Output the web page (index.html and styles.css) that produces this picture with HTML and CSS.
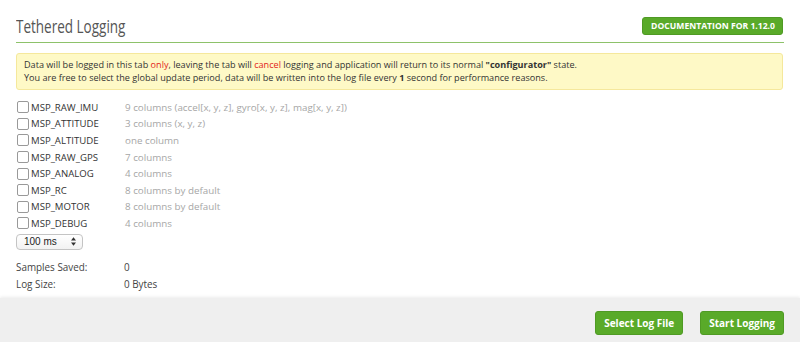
FILE: index.html
```html
<!DOCTYPE html>
<html>
<head>
<meta charset="utf-8">
<link rel="stylesheet" href="styles.css">
</head>
<body>
<div class="tab">
  <div class="header">
    <div class="title">Tethered Logging</div>
    <a class="doc-btn">DOCUMENTATION FOR 1.12.0</a>
  </div>
  <div class="note">
    <p>Data will be logged in this tab <span class="red">only</span>, leaving the tab will <span class="red">cancel</span> logging and application will return to its normal <strong>"configurator"</strong> state.</p>
    <p>You are free to select the global update period, data will be written into the log file every <strong>1</strong> second for performance reasons.</p>
  </div>
  <div class="props">
    <label class="row"><span class="cb"></span><span class="name">MSP_RAW_IMU</span><span class="desc">9 columns (accel[x, y, z], gyro[x, y, z], mag[x, y, z])</span></label>
    <label class="row"><span class="cb"></span><span class="name">MSP_ATTITUDE</span><span class="desc">3 columns (x, y, z)</span></label>
    <label class="row"><span class="cb"></span><span class="name">MSP_ALTITUDE</span><span class="desc">one column</span></label>
    <label class="row"><span class="cb"></span><span class="name">MSP_RAW_GPS</span><span class="desc">7 columns</span></label>
    <label class="row"><span class="cb"></span><span class="name">MSP_ANALOG</span><span class="desc">4 columns</span></label>
    <label class="row"><span class="cb"></span><span class="name">MSP_RC</span><span class="desc">8 columns by default</span></label>
    <label class="row"><span class="cb"></span><span class="name">MSP_MOTOR</span><span class="desc">8 columns by default</span></label>
    <label class="row"><span class="cb"></span><span class="name">MSP_DEBUG</span><span class="desc">4 columns</span></label>
  </div>
  <div class="select">
    <span class="sel-text">100 ms</span>
    <svg class="arrows" width="5" height="9" viewBox="0 0 5 9"><path d="M0 3.6 L2.5 0.3 L5 3.6 Z M0 5.4 L2.5 8.7 L5 5.4 Z" fill="#333"/></svg>
  </div>
  <div class="info">
    <div class="info-row"><span class="ilabel">Samples Saved:</span><span class="ival">0</span></div>
    <div class="info-row"><span class="ilabel">Log Size:</span><span class="ival">0 Bytes</span></div>
  </div>
</div>
<div class="footer">
  <a class="btn">Select Log File</a>
  <a class="btn">Start Logging</a>
</div>
</body>
</html>
```
FILE: styles.css
```css
html, body {
  margin: 0;
  padding: 0;
  background: #fff;
  font-family: "Open Sans", "Liberation Sans", sans-serif;
  font-size: 10px;
  color: #333;
  height: 342px;
  overflow: hidden;
}
.tab {
  padding: 15px 16px 0 16px;
  height: 283px;
}
.header {
  display: flex;
  justify-content: space-between;
  align-items: flex-end;
  border-bottom: 1px solid #8dc26a;
  padding-bottom: 5px;
}
.title {
  font-size: 18px;
  line-height: 22px;
  color: #555;
  transform: scaleX(0.75);
  transform-origin: left center;
  white-space: nowrap;
}
.doc-btn {
  display: block;
  background: #59aa29;
  border: 1px solid #4f9a24;
  border-radius: 3px;
  color: #fff;
  font-weight: 700;
  font-size: 8.6px;
  line-height: 16px;
  padding: 0 7px 0 8px;
  margin-right: 1px;
  margin-bottom: 2px;
}
.note {
  margin-top: 10px;
  background: #fef9c6;
  border: 1px solid #f5e89c;
  border-radius: 3px;
  padding: 5px 7px 5px 7px;
  color: #333;
  font-size: 9.1px;
  line-height: 12.5px;
  margin-right: 1px;
}
.note p { margin: 0; }
.red { color: #e2231a; }
.note strong { font-weight: 700; }
.props {
  margin-top: 9px;
}
.row {
  display: flex;
  align-items: center;
  height: 16.6px;
}
.cb {
  width: 10px;
  height: 10px;
  border: 1px solid #999;
  border-radius: 2px;
  background: #fff;
  margin-left: 1px;
  margin-right: 2px;
  flex: none;
}
.name {
  width: 94px;
  color: #333;
  font-size: 9.6px;
}
.desc {
  color: #a6a6a6;
  font-size: 9.8px;
}
.select {
  margin-top: 2px;
  height: 14px;
  border: 1px solid #c4c4c4;
  border-radius: 4px;
  background: linear-gradient(#ffffff, #f2f2f2);
  display: flex;
  align-items: center;
  justify-content: space-between;
  padding: 0 6px 0 7px;
  box-sizing: content-box;
  width: 52px;
  font-family: "Liberation Sans", Arial, sans-serif;
  font-size: 10px;
  color: #222;
}
.info {
  margin-top: 9px;
}
.info-row {
  display: flex;
  height: 16.5px;
  align-items: center;
  font-size: 9.9px;
  color: #444;
}
.ilabel { width: 108px; }
.footer {
  height: 53px;
  background: #efefef;
  box-shadow: 0 -1px 3px rgba(0,0,0,0.08);
  display: flex;
  justify-content: flex-end;
  gap: 17px;
  padding: 13px 16px 0 0;
  box-sizing: border-box;
}
.btn {
  display: block;
  height: 24px;
  box-sizing: border-box;
  background: #59aa29;
  border: 1px solid #4f9a24;
  border-radius: 3px;
  color: #fff;
  font-weight: 700;
  font-size: 10px;
  line-height: 22px;
  padding: 0 8px;
}
```
